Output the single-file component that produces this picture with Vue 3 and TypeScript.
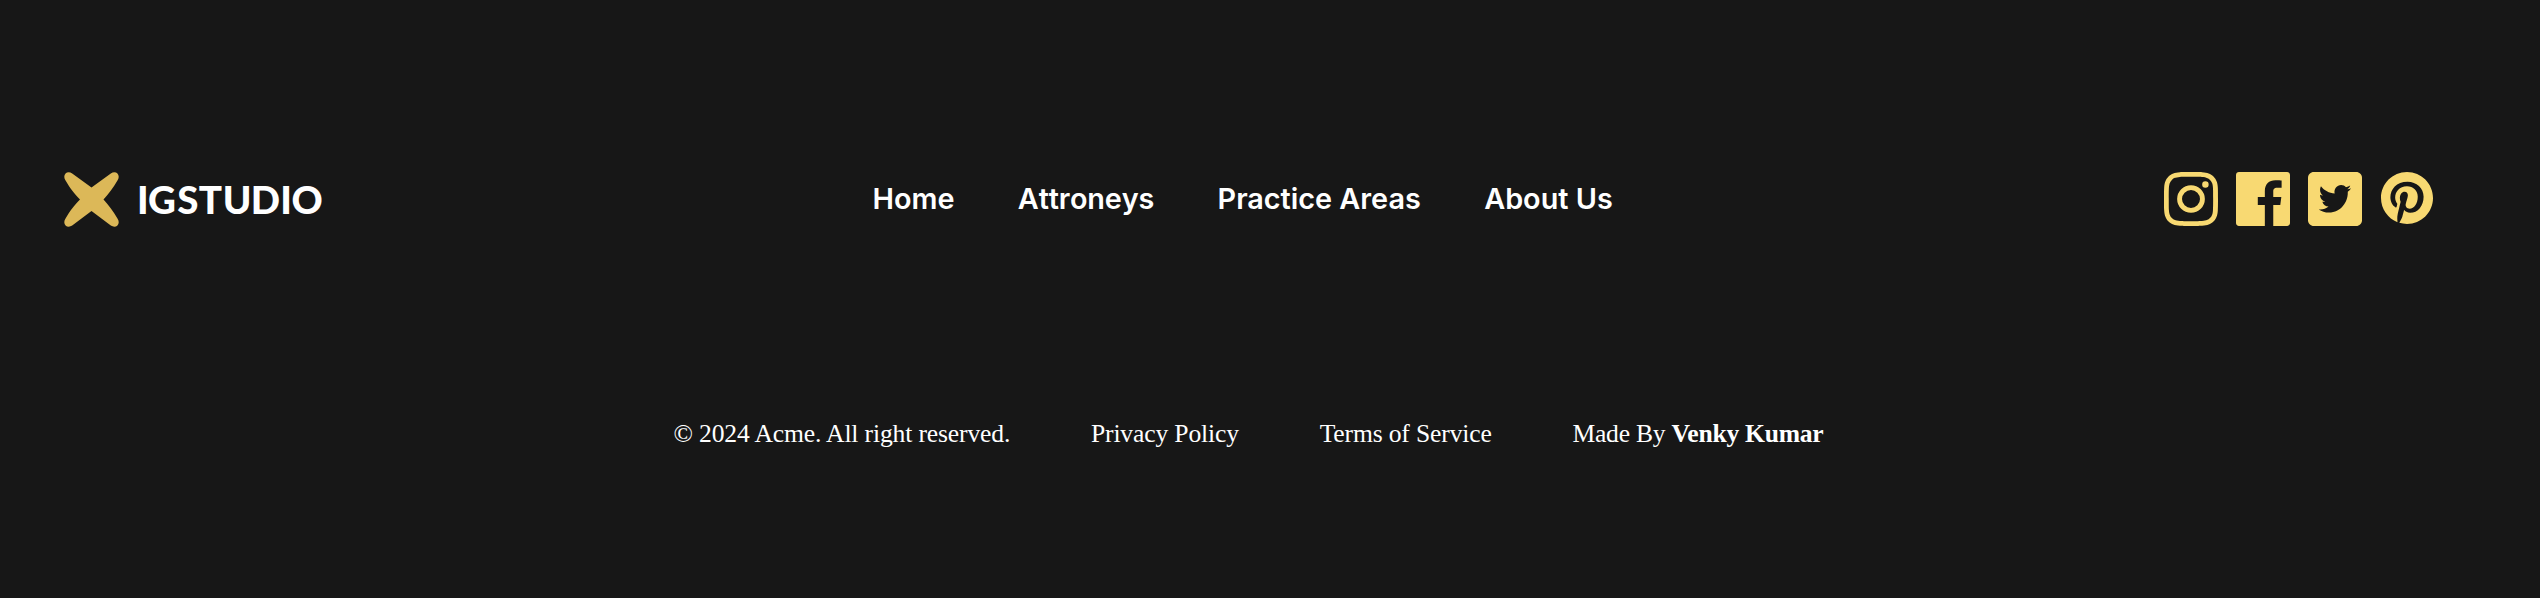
<script setup lang="ts">
const links: string[] = ['Home', 'Attroneys', 'Practice Areas', 'About Us']
</script>

<template>
  <footer class="footer">
    <div class="top">
      <div class="brand">
        <svg class="mark" viewBox="0 0 55 55" aria-hidden="true">
          <path d="M27.5 15.500 46.800 1.500C52-2 57 3 53.600 8.200 49 16 45 21.500 39.500 27.500 45 33.500 49 39 53.600 46.800 57 52 52 57 46.800 53.600L27.500 39 8.200 53.600C3 57-2 52 1.400 46.800 6 39 10 33.500 16 27.500 10 21.500 6 16 1.400 8.200-2 3 3-2 8.200 1.500Z" />
        </svg>
        <svg class="wordmark" viewBox="0 0 184 40" role="img" aria-label="IGSTUDIO">
          <text x="3.800 23 48.800 71.500 98 126.500 147 168" y="34.500" text-anchor="middle">IGSTUDIO</text>
        </svg>
      </div>
      <nav class="nav">
        <a v-for="link in links" :key="link">{{ link }}</a>
      </nav>
      <div class="social">
        <svg viewBox="0 0 24 24" aria-label="Instagram">
          <path d="M12 0C8.740 0 8.333.015 7.053.072 5.775.132 4.905.333 4.140.630c-.789.306-1.459.717-2.126 1.384S.935 3.350.630 4.140C.333 4.905.131 5.775.072 7.053.012 8.333 0 8.740 0 12s.015 3.667.072 4.947c.060 1.277.261 2.148.558 2.913.306.788.717 1.459 1.384 2.126.667.666 1.336 1.079 2.126 1.384.766.296 1.636.499 2.913.558C8.333 23.988 8.740 24 12 24s3.667-.015 4.947-.072c1.277-.060 2.148-.262 2.913-.558.788-.306 1.459-.718 2.126-1.384.666-.667 1.079-1.335 1.384-2.126.296-.765.499-1.636.558-2.913.060-1.280.072-1.687.072-4.947s-.015-3.667-.072-4.947c-.060-1.277-.262-2.149-.558-2.913-.306-.789-.718-1.459-1.384-2.126C21.319 1.347 20.651.935 19.860.630c-.765-.297-1.636-.499-2.913-.558C15.667.012 15.260 0 12 0zm0 2.160c3.203 0 3.585.016 4.850.071 1.170.055 1.805.249 2.227.415.562.217.960.477 1.382.896.419.420.679.819.896 1.381.164.422.360 1.057.413 2.227.057 1.266.070 1.646.070 4.850s-.015 3.585-.074 4.850c-.061 1.170-.256 1.805-.421 2.227-.224.562-.479.960-.899 1.382-.419.419-.824.679-1.380.896-.420.164-1.065.360-2.235.413-1.274.057-1.649.070-4.859.070-3.211 0-3.586-.015-4.859-.074-1.171-.061-1.816-.256-2.236-.421-.569-.224-.960-.479-1.379-.899-.421-.419-.690-.824-.900-1.380-.165-.420-.359-1.065-.420-2.235-.045-1.260-.061-1.649-.061-4.844 0-3.196.016-3.586.061-4.861.061-1.170.255-1.814.420-2.234.210-.570.479-.960.900-1.381.419-.419.810-.689 1.379-.898.420-.166 1.051-.361 2.221-.421 1.275-.045 1.650-.060 4.859-.060l.045.030zm0 3.678a6.162 6.162 0 1 0 0 12.324 6.162 6.162 0 0 0 0-12.324zM12 16a4 4 0 1 1 0-8 4 4 0 0 1 0 8zm7.846-10.405a1.441 1.441 0 1 1-2.882 0 1.441 1.441 0 0 1 2.882 0z" />
        </svg>
        <svg viewBox="0 0 24 24" aria-label="Facebook">
          <path d="M22.676 0H1.324C.593 0 0 .593 0 1.324v21.352C0 23.408.593 24 1.324 24h11.494v-9.294H9.689v-3.621h3.129V8.410c0-3.099 1.894-4.785 4.659-4.785 1.325 0 2.464.097 2.796.141v3.240h-1.921c-1.500 0-1.792.721-1.792 1.771v2.311h3.584l-.465 3.630H16.560V24h6.115c.733 0 1.325-.592 1.325-1.324V1.324C24 .593 23.408 0 22.676 0" />
        </svg>
        <svg viewBox="0 0 448 448" aria-label="Twitter">
          <path d="M400 0H48C21.500 0 0 21.500 0 48v352c0 26.500 21.500 48 48 48h352c26.500 0 48-21.500 48-48V48c0-26.500-21.500-48-48-48z" />
          <path class="bird" d="M351.100 158.800c.2 2.800.2 5.700.2 8.500 0 86.700-66 186.600-186.600 186.600-37.200 0-71.700-10.800-100.700-29.400 5.300.6 10.400.8 15.800.8 30.700 0 58.900-10.400 81.400-28-28.800-.6-53-19.500-61.300-45.500 10.100 1.500 19.200 1.500 29.600-1.200-30-6.100-52.500-32.500-52.500-64.400v-.8c8.700 4.900 18.900 7.900 29.600 8.300a65.447 65.447 0 0 1-29.200-54.600c0-12.200 3.200-23.400 8.900-33.100 32.300 39.800 80.800 65.800 135.200 68.600-9.300-44.500 24-80.600 64-80.600 18.900 0 35.900 7.900 47.900 20.700 14.800-2.800 29-8.300 41.600-15.800-4.900 15.200-15.200 28-28.800 36.100 13.200-1.400 26-5.100 37.800-10.200-8.900 13.100-20.100 24.700-32.900 34z" transform="translate(35 25) scale(.84 .88)" />
        </svg>
        <svg viewBox="0 0 496 512" class="pin" aria-label="Pinterest">
          <path d="M496 256c0 137-111 248-248 248-25.600 0-50.200-3.900-73.400-11.100 10.100-16.500 25.200-43.500 30.800-65 3-11.600 15.400-59 15.400-59 8.100 15.400 31.700 28.500 56.800 28.500 74.800 0 128.700-68.800 128.700-154.300 0-81.900-66.900-143.200-152.900-143.200-107 0-163.900 71.800-163.900 150.100 0 36.400 19.400 81.700 50.300 96.100 4.700 2.200 7.200 1.200 8.300-3.300.8-3.400 5-20.300 6.900-28.100.6-2.500.3-4.700-1.700-7.100-10.100-12.500-18.300-35.300-18.300-56.600 0-54.700 41.400-107.600 112-107.600 60.900 0 103.600 41.500 103.600 100.900 0 67.100-33.900 113.600-78 113.600-24.300 0-42.600-20.100-36.700-44.800 7-29.500 20.500-61.300 20.500-82.600 0-19-10.200-34.900-31.400-34.900-24.900 0-44.900 25.700-44.900 60.200 0 22 7.400 36.800 7.400 36.800s-24.500 103.800-29 123.200c-5 21.400-3 51.600-.9 71.200C65.400 450.900 0 361.100 0 256 0 119 111 8 248 8s248 111 248 248z" />
        </svg>
      </div>
    </div>
    <div class="legal">
      <span>© 2024 Acme. All right reserved.</span>
      <span>Privacy Policy</span>
      <span>Terms of Service</span>
      <span class="credit">Made By <b>Venky Kumar</b></span>
    </div>
  </footer>
</template>

<style>
body {
  margin: 0;
  background: #171717;
}
</style>

<style scoped>
.footer {
  box-sizing: border-box;
  height: 598px;
  padding: 160px 107px 0 64px;
  background: #171717;
  color: #fff;
}
.top {
  display: grid;
  grid-template-columns: 808.5px 1fr auto;
  align-items: center;
  height: 78px;
}
.brand {
  display: flex;
  align-items: center;
  gap: 20px;
}
.mark {
  width: 55px;
  height: 55px;
  fill: #dcb858;
}
.wordmark {
  width: 184px;
  height: 40px;
  overflow: visible;
}
.wordmark text {
  font: 900 38.5px Lato, sans-serif;
  fill: #fff;
}
.nav {
  display: flex;
  gap: 63.4px;
  font: 600 28.8px/36px Inter, sans-serif;
}
.nav a:nth-child(2) {
  font-kerning: none;
  letter-spacing: -0.15px;
}
.social {
  display: flex;
  gap: 18px;
}
.social svg {
  width: 54px;
  height: 54px;
  fill: #f8d972;
}
.social .bird {
  fill: #171717;
}
.social .pin {
  width: 52px;
  height: 54px;
  margin: -1px 0 0 1px;
}
.legal {
  display: flex;
  gap: 80.8px;
  margin: 181px 0 0 609.5px;
  font: 25.6px/30px "Liberation Serif", serif;
  letter-spacing: -0.15px;
}
.credit {
  letter-spacing: -0.25px;
}
</style>
